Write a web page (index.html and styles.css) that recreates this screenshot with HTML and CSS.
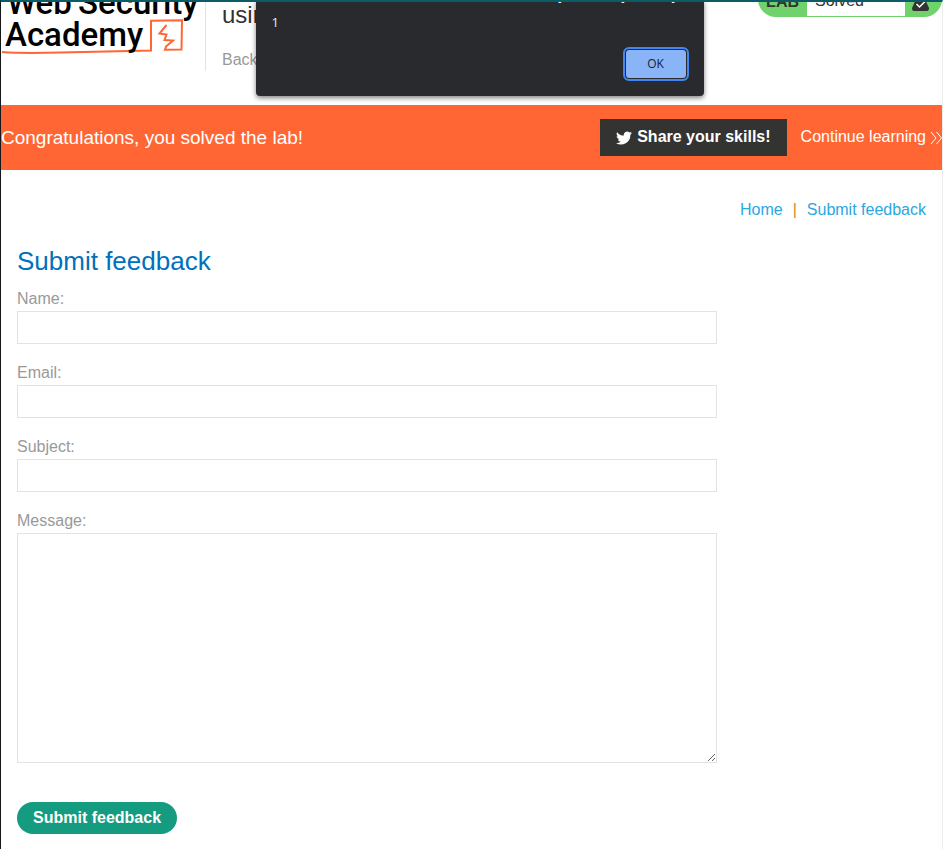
FILE: index.html
```html
<!DOCTYPE html>
<html lang="en">
<head>
<meta charset="utf-8">
<meta name="viewport" content="width=device-width, initial-scale=1">
<title>Submit feedback</title>
<link rel="stylesheet" href="styles.css">
</head>
<body>
<header class="lab-header">
  <svg class="logo" viewBox="0 0 200 70" width="200" height="70" role="img" aria-label="Web Security Academy">
    <path d="M1 66 Q20 67.500 60 66.500 T150 64.600 L150 34.800 L181 34.200 L180.500 63.500 L164 63.800 L165 60.500 L172 54.500 L163.500 54 L165.500 48.500 L158.500 47.500 L165.500 39" fill="none" stroke="#ff6633" stroke-width="2"/>
    <g class="logo-text">
      <text x="6" y="28">Web</text>
      <text x="77" y="28">Security</text>
      <text x="4" y="60">Academy</text>
    </g>
  </svg>
  <div class="lab-title">
    <h2>using a select element</h2>
    <a href="#">Back to lab description</a>
  </div>
  <div class="status">
    <span class="status-label">LAB</span>
    <span class="status-value">Solved</span>
    <svg class="flask" viewBox="0 0 17 20" width="17" height="20" aria-hidden="true">
      <path d="M5 0H12V6L17 17Q17 20 15 20H2Q0 20 0 17L5 6Z" fill="#333332"/>
      <path d="M4.500 13L7.500 16L13 10.500" fill="none" stroke="#fff" stroke-width="1.500"/>
    </svg>
  </div>
</header>
<section class="banner">
  <p>Congratulations, you solved the lab!</p>
  <a class="share" href="#"><svg viewBox="0 0 24 24" width="16" height="16" aria-hidden="true"><path fill="#fff" d="M24 4.600a10 10 0 0 1-2.800.8 5 5 0 0 0 2.100-2.700 10 10 0 0 1-3.100 1.200 4.900 4.900 0 0 0-8.400 4.500A14 14 0 0 1 1.700 3.200a4.900 4.900 0 0 0 1.500 6.500 5 5 0 0 1-2.200-.6 4.900 4.900 0 0 0 3.900 4.900 5 5 0 0 1-2.200.1 4.900 4.900 0 0 0 4.600 3.400A10 10 0 0 1 0 19.500 14 14 0 0 0 21.500 7.100 10 10 0 0 0 24 4.600z"/></svg>Share your skills!</a>
  <a class="continue" href="#">Continue learning<svg viewBox="0 0 12 14" width="12" height="14" aria-hidden="true"><path d="M1 1L6 7L1 13M6.500 1L11.500 7L6.500 13" fill="none" stroke="#fff"/></svg></a>
</section>
<main>
  <nav><a href="#">Home</a><span>|</span><a href="#">Submit feedback</a></nav>
  <h1>Submit feedback</h1>
  <form>
    <label for="name">Name:</label>
    <input id="name" type="text">
    <label for="email">Email:</label>
    <input id="email" type="email">
    <label for="subject">Subject:</label>
    <input id="subject" type="text">
    <label for="message">Message:</label>
    <textarea id="message"></textarea>
    <button class="submit" type="submit">Submit feedback</button>
  </form>
</main>
<div class="dialog" role="alertdialog" aria-labelledby="dialog-title" aria-describedby="dialog-message">
  <div id="dialog-title" class="dialog-title">web-security-academy.net says</div>
  <div id="dialog-message" class="dialog-message">1</div>
  <button class="ok" type="button">OK</button>
</div>
</body>
</html>
```
FILE: styles.css
```css
* {
  box-sizing: border-box;
}

body {
  margin: 0;
  min-height: 100vh;
  overflow: hidden;
  position: relative;
  border-top: 2px solid #0b5c66;
  border-left: 1px solid #17171b;
  border-right: 1px solid #ececec;
  background: #fff;
  color: #999;
  font: 16px/20px "Liberation Sans", Arial, sans-serif;
}

a {
  text-decoration: none;
}

/* The header is scrolled partly out of view, so its content hangs from the bottom. */
.lab-header {
  display: flex;
  align-items: flex-end;
  height: 103px;
  padding-bottom: 34px;
  overflow: hidden;
}

.logo {
  flex: none;
  margin-bottom: 15px;
}

.logo-text {
  font: 500 33px Roboto, sans-serif;
  fill: #000;
}

.lab-title {
  flex: none;
  display: flex;
  flex-direction: column;
  justify-content: flex-end;
  height: 120px;
  margin-left: 4px;
  padding-left: 16px;
  border-left: 1px solid #e3e3e3;
  white-space: nowrap;
}

.lab-title h2 {
  margin: 0 0 21px;
  color: #333332;
  font-size: 24px;
  font-weight: 400;
  line-height: 28px;
}

.lab-title a {
  margin-bottom: 1px;
  color: #999;
}

.status {
  display: flex;
  align-items: center;
  height: 36px;
  margin-left: auto;
  margin-bottom: 54px;
  padding-bottom: 1px;
  border-radius: 18px;
  background: #6fd26b;
  color: #333332;
}

.status-label {
  padding: 6px 8px 0;
  font-weight: 700;
}

.status-value {
  width: 98px;
  padding: 9px 8px 5px;
  background: #fff;
  line-height: 21px;
}

.flask {
  margin: 4px 13px 0 7px;
}

.banner {
  display: flex;
  align-items: center;
  height: 65px;
  background: #ff6633;
  color: #fff;
}

.banner p {
  margin: 0;
  font-size: 19px;
}

.share {
  display: flex;
  align-items: center;
  gap: 5px;
  height: 37px;
  margin-left: auto;
  padding: 0 16px 2px;
  background: #333332;
  color: #fff;
  font-weight: 700;
}

.share svg {
  margin-top: 3px;
}

.continue {
  display: flex;
  align-items: center;
  gap: 4px;
  margin-left: 14px;
  padding-bottom: 2px;
  color: #fff;
}

.continue svg {
  margin-top: 3px;
}

main {
  padding: 30px 16px 15px;
}

nav {
  display: flex;
  justify-content: flex-end;
  gap: 10px;
}

nav a {
  color: #29a7e1;
}

nav span {
  color: #d08a20;
}

h1 {
  margin: 24px 0 14px;
  color: #0071bc;
  font-size: 26px;
  font-weight: 400;
  line-height: 34px;
}

form {
  display: flex;
  flex-direction: column;
  max-width: 700px;
}

label {
  height: 19px;
  line-height: 14px;
}

input,
textarea {
  margin: 0 0 22px;
  border: 1px solid #e3e3e3;
  border-radius: 0;
  background: #fff;
  font: inherit;
}

input {
  height: 33px;
}

textarea {
  height: 230px;
  margin-bottom: 39px;
  resize: both;
}

.submit {
  align-self: flex-start;
  height: 32px;
  padding: 0 16px;
  border: 0;
  border-radius: 16px;
  background: #159b80;
  color: #fff;
  font: 700 16px "Liberation Sans", Arial, sans-serif;
}

.dialog {
  position: absolute;
  top: -2px;
  left: 50%;
  display: flex;
  flex-direction: column;
  width: 448px;
  height: 96px;
  margin-left: -216px;
  padding: 0 16px;
  border-radius: 0 0 4px 4px;
  background: #292a2d;
  box-shadow: 0 2px 5px rgba(0, 0, 0, 0.5);
  color: #e8eaed;
  font: 13px/18px "Open Sans", sans-serif;
}

.dialog-title {
  align-self: flex-end;
  margin: -15px 2px 10px;
  color: #fff;
  font-size: 14px;
}

.ok {
  align-self: flex-end;
  width: 62px;
  height: 30px;
  margin: 18px 1px 0;
  padding: 0 0 2px;
  border: 1px solid #292a2d;
  border-radius: 4px;
  outline: 2px solid #4285f4;
  background: #8ab4f8;
  color: #202124;
  font: 12px "Open Sans", sans-serif;
}
```
